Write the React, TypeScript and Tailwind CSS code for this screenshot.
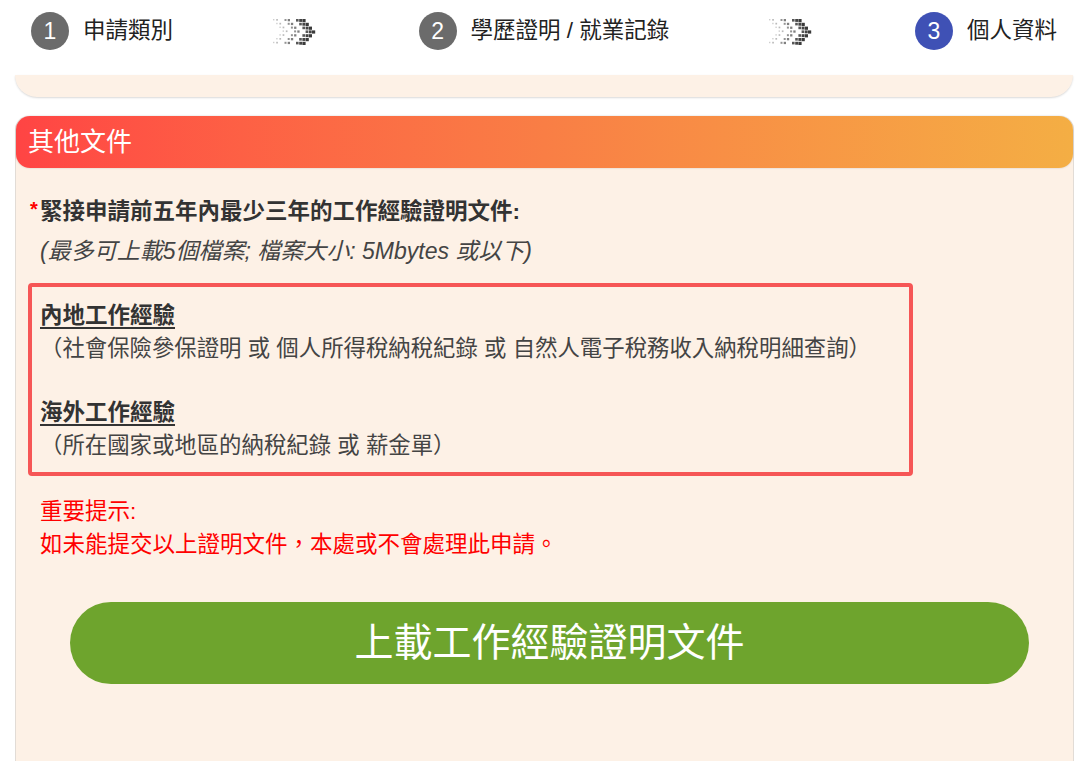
import React from "react";

function DottedArrow() {
  // three dotted chevrons, fainter on the left
  const dots: { x: number; y: number; s: number; o: number }[] = [];
  for (let k = 0; k < 3; k++) {
    const cols = k === 2 ? 3 : 2;
    for (let r = 0; r < 7; r++) {
      const d = (3 - Math.abs(r - 3)) * 3.2;
      for (let c = 0; c < cols; c++) {
        dots.push({
          x: k * 11.5 + d + c * 3.2,
          y: 1 + r * 3.8,
          s: 1.4 + k * 0.6 + c * 0.3,
          o: 0.25 + k * 0.3 + c * 0.1,
        });
      }
    }
  }
  return (
    <svg width="46" height="30" viewBox="0 0 46 30" className="mt-[6px] shrink-0">
      {dots.map((p, i) => (
        <rect key={i} x={p.x} y={p.y} width={p.s} height={p.s} fill="#3a3a3a" opacity={Math.min(p.o, 1)} />
      ))}
    </svg>
  );
}

function Step({ n, label, active }: { n: number; label: string; active?: boolean }) {
  return (
    <div className="flex items-center gap-[14px]">
      <div
        className={`flex h-[38px] w-[38px] items-center justify-center rounded-full text-[23px] text-white ${
          active ? "bg-[#3f51b5]" : "bg-[#6b6b6b]"
        }`}
      >
        {n}
      </div>
      <span className="text-[22.5px] leading-[38px] text-[#222]">{label}</span>
    </div>
  );
}

export default function App() {
  return (
    <div className="min-h-screen bg-white font-['Liberation_Sans','Noto_Sans_CJK_TC',sans-serif] text-[#333]">
      {/* Steps */}
      <div className="flex h-[75px] items-start justify-between pl-[31px] pr-[23px] pt-[12px]">
        <Step n={1} label="申請類別" />
        <DottedArrow />
        <Step n={2} label="學歷證明 / 就業記錄" />
        <DottedArrow />
        <Step n={3} label="個人資料" active />
      </div>

      {/* end of previous card */}
      <div className="ml-[15px] mr-[7px] h-[22px] rounded-b-[22px] bg-[#fdf1e6] shadow-[0_1px_2px_rgba(0,0,0,0.15)]" />

      {/* Other documents */}
      <div className="ml-[15px] mr-[6px] mt-[19px] rounded-t-[14px] border-x border-[#e2dcd6] bg-[#fdf1e6] pb-[80px]">
        <div className="flex h-[52px] items-center rounded-[14px] bg-linear-to-r from-[#ff4444] via-[#f97e45] to-[#f4ae44] pl-[12px] text-[26px] text-white shadow-[0_0_2px_rgba(0,0,0,0.2)]">
          其他文件
        </div>

        <div className="px-[12px] pt-[27px]">
          <div className="flex items-start pl-[2px] text-[22.5px] font-bold leading-[33px]">
            <span className="w-[10px] text-[20px] leading-[28px] text-[#ff0000]">*</span>
            <span>緊接申請前五年內最少三年的工作經驗證明文件:</span>
          </div>
          <div className="mt-[7px] pl-[12px] text-[23px] italic leading-[33px] text-[#444]">
            (最多可上載5個檔案; 檔案大小: 5Mbytes 或以下)
          </div>

          <div className="mt-[15px] w-[885px] rounded-[4px] border-[4px] border-[#f65656] px-[8px] pb-[10px] pt-[12px] text-[22.5px] leading-[33px]">
            <div className="font-bold underline underline-offset-[4px]">內地工作經驗</div>
            <div className="text-[22.4px] text-[#444]">（社會保險參保證明 或 個人所得稅納稅紀錄 或 自然人電子稅務收入納稅明細查詢）</div>
            <div className="h-[31px]" />
            <div className="font-bold underline underline-offset-[4px]">海外工作經驗</div>
            <div className="text-[22.4px] text-[#444]">（所在國家或地區的納稅紀錄 或 薪金單）</div>
          </div>

          <div className="mt-[19px] pl-[12px] text-[22.5px] leading-[33px] text-[#ff0000]">
            <div>重要提示:</div>
            <div>如未能提交以上證明文件，本處或不會處理此申請。</div>
          </div>
        </div>

        <button className="ml-[54px] mt-[41px] flex h-[82px] w-[959px] items-center justify-center rounded-full bg-[#6ea42d] text-[39px] text-white">
          上載工作經驗證明文件
        </button>
      </div>
    </div>
  );
}
